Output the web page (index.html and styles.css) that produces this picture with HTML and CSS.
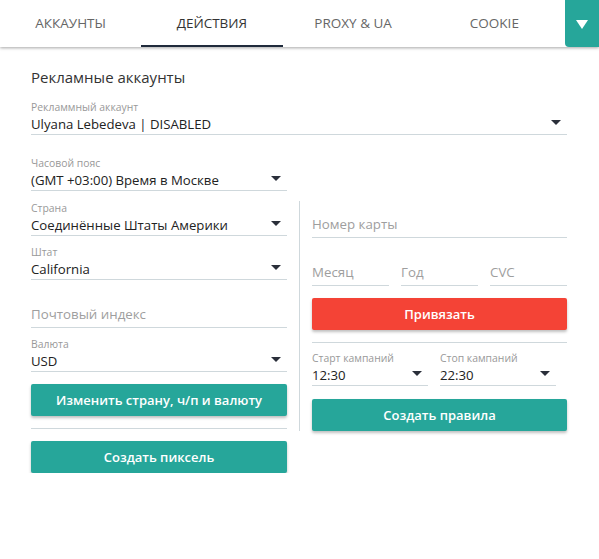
FILE: index.html
```html
<!DOCTYPE html>
<html lang="ru">
<head>
<meta charset="utf-8">
<link rel="stylesheet" href="styles.css">
</head>
<body>
<div class="tabs">
  <div class="tab">Аккаунты</div>
  <div class="tab active">Действия</div>
  <div class="tab">Proxy &amp; UA</div>
  <div class="tab">Cookie</div>
  <div class="menu-btn"><span class="menu-tri"></span></div>
</div>
<div class="content">
  <div class="title">Рекламные аккаунты</div>
  <div class="field f-account">
    <div class="label">Рекламмный аккаунт</div>
    <div class="value-row"><span class="value">Ulyana Lebedeva | DISABLED</span><span class="arrow"></span></div>
  </div>
  <div class="field f-tz half">
    <div class="label">Часовой пояс</div>
    <div class="value-row"><span class="value">(GMT +03:00) Время в Москве</span><span class="arrow"></span></div>
  </div>
  <div class="cols">
    <div class="col-left">
      <div class="field">
        <div class="label">Страна</div>
        <div class="value-row"><span class="value">Соединённые Штаты Америки</span><span class="arrow"></span></div>
      </div>
      <div class="field f-state">
        <div class="label">Штат</div>
        <div class="value-row"><span class="value">California</span><span class="arrow"></span></div>
      </div>
      <div class="input f-zip">Почтовый индекс</div>
      <div class="field f-cur">
        <div class="label">Валюта</div>
        <div class="value-row"><span class="value">USD</span><span class="arrow"></span></div>
      </div>
      <div class="btn teal b1">Изменить страну, ч/п и валюту</div>
      <div class="sep"></div>
      <div class="btn teal b2">Создать пиксель</div>
    </div>
    <div class="col-right">
      <div class="input f-card">Номер карты</div>
      <div class="card-row">
        <div class="input">Месяц</div>
        <div class="input">Год</div>
        <div class="input">CVC</div>
      </div>
      <div class="btn red b3">Привязать</div>
      <div class="sep"></div>
      <div class="time-row">
        <div class="field">
          <div class="label">Старт кампаний</div>
          <div class="value-row"><span class="value">12:30</span><span class="arrow"></span></div>
        </div>
        <div class="field">
          <div class="label">Стоп кампаний</div>
          <div class="value-row"><span class="value">22:30</span><span class="arrow"></span></div>
        </div>
      </div>
      <div class="btn teal b4">Создать правила</div>
    </div>
  </div>
</div>
</body>
</html>
```

FILE: styles.css
```css
* { box-sizing: border-box; }
html, body { margin: 0; padding: 0; background: #fff; }
body {
  font-family: "Open Sans", "Noto Sans", sans-serif;
  color: #222;
  width: 599px;
}
.tabs {
  display: flex;
  height: 47px;
  background: #fff;
  box-shadow: 0 1px 3px rgba(0,0,0,0.35);
  position: relative;
}
.tab {
  flex: 0 0 141.25px;
  text-align: center;
  text-transform: uppercase;
  font-size: 13.5px;
  line-height: 47px;
  color: #666;
}
.tab.active {
  color: #333;
  box-shadow: inset 0 -2px 0 #1f2a3b;
}
.menu-btn {
  flex: 1;
  background: #26a69a;
  border-bottom-left-radius: 4px;
  display: flex;
  align-items: center;
  justify-content: center;
}
.menu-tri {
  width: 0; height: 0;
  border-left: 6px solid transparent;
  border-right: 6px solid transparent;
  border-top: 9px solid #fff;
  margin-top: 1px;
}
.content {
  padding: 20px 32px 0 31px;
}
.title {
  font-size: 15px;
  line-height: 20px;
  color: #333;
}
.label {
  font-size: 10.4px;
  line-height: 14px;
  color: #999;
}
.value-row {
  display: flex;
  align-items: center;
  justify-content: space-between;
  border-bottom: 1px solid #cfd8dc;
  height: 21px;
}
.value {
  font-size: 13.2px;
  line-height: 20px;
  color: #222;
  white-space: nowrap;
}
.arrow {
  width: 0; height: 0;
  border-left: 5px solid transparent;
  border-right: 5px solid transparent;
  border-top: 5px solid #2a2f3a;
  margin-right: 6px;
  margin-bottom: 4px;
}
.f-account { margin-top: 13px; }
.f-tz { margin-top: 21px; }
.half { width: 256px; }
.cols {
  display: flex;
  align-items: flex-start;
  margin-top: 10px;
}
.col-left { width: 256px; }
.col-right {
  width: 268px;
  margin-left: 12px;
  padding-left: 12px;
  border-left: 1px solid #cfd8dc;
}
.f-state { margin-top: 9px; }
.input {
  font-size: 13.3px;
  line-height: 20px;
  color: #9e9e9e;
  padding-bottom: 3px;
  border-bottom: 1px solid #cfd8dc;
  white-space: nowrap;
}
.f-zip { margin-top: 24px; }
.f-cur { margin-top: 9px; }
.btn {
  height: 32px;
  border-radius: 2px;
  color: #fff;
  font-size: 13px;
  font-weight: 600;
  text-align: center;
  line-height: 32px;
  box-shadow: 0 2px 3px rgba(0,0,0,0.25);
}
.teal { background: #26a69a; }
.red { background: #f44336; }
.b1 { margin-top: 12px; }
.sep {
  height: 1px;
  background: #cfd8dc;
  margin-top: 12px;
}
.b2 { margin-top: 12px; }
.f-card { margin-top: 13px; }
.card-row {
  display: grid;
  grid-template-columns: 77px 77px 77px;
  column-gap: 12px;
  margin-top: 24px;
}
.b3 { margin-top: 12px; }
.time-row {
  display: grid;
  grid-template-columns: 116px 116px;
  column-gap: 12px;
  margin-top: 8px;
}
.b4 { margin-top: 13px; }
```
